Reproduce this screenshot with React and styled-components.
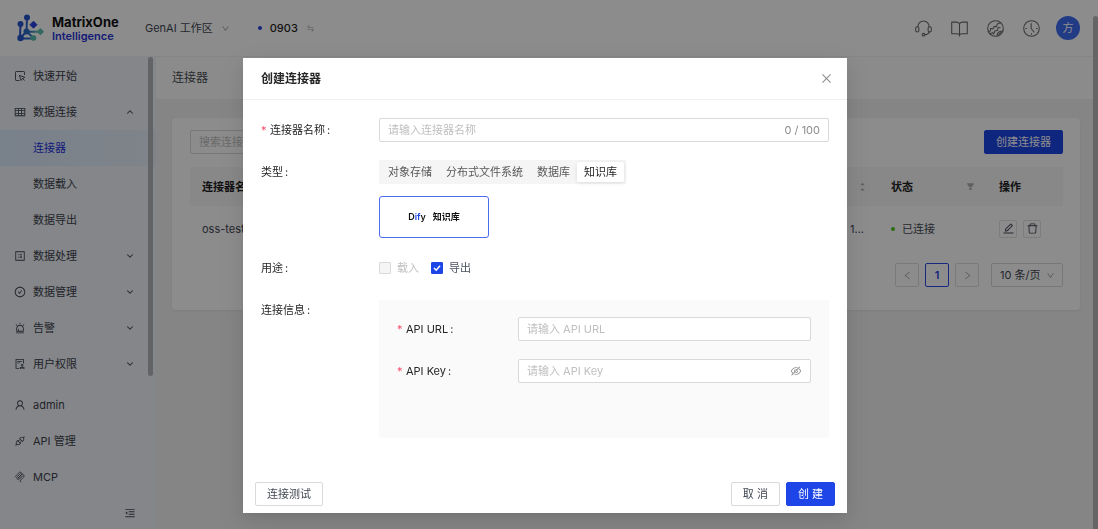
import React, { useState } from 'react'
import styled, { createGlobalStyle } from 'styled-components'
import {
    AiOutlineTable,
    AiOutlineProfile,
    AiOutlineCheckCircle,
    AiOutlineAlert,
    AiOutlineAudit,
    AiOutlineUser,
    AiOutlineApi,
    AiOutlineMenuFold,
    AiOutlineSwap,
    AiOutlineDown,
    AiOutlineLeft,
    AiOutlineRight,
    AiOutlineClose,
    AiOutlineEdit,
    AiOutlineDelete,
    AiOutlineEyeInvisible,
    AiFillFilter,
    AiFillCaretUp,
    AiFillCaretDown,
} from 'react-icons/ai'
import { ChevronDown, ChevronUp } from 'lucide-react'

const line = { fill: 'none', stroke: 'currentColor', strokeLinecap: 'round', strokeLinejoin: 'round' }

const StartIcon = () => (
    <svg width="12" height="12" viewBox="0 0 24 24" strokeWidth="1.800" {...line}>
        <path d="M21 9V4.500A1.500 1.500 0 0 0 19.500 3h-15A1.500 1.500 0 0 0 3 4.500v15A1.500 1.500 0 0 0 4.500 21H10" />
        <path d="M11 11l10.500 3.500-4 2.500 3 3.500M11 11l3 10 3-4" />
    </svg>
)

const McpIcon = () => (
    <svg width="12" height="12" viewBox="0 0 24 24" strokeWidth="1.600" {...line}>
        <path d="M2 11.500l8.500-8.500a3.200 3.200 0 0 1 4.500 4.500l-6.500 6.500" />
        <path d="M8.700 13.800l6.300-6.300a3.200 3.200 0 0 1 4.500 4.500l-7.700 7.700 2.200 2.300" />
        <path d="M12.800 5.200l-6.500 6.500a3.200 3.200 0 0 0 4.500 4.500l6.400-6.400" />
    </svg>
)

const HeadsetIcon = () => (
    <svg width="17" height="17" viewBox="0 0 24 24" strokeWidth="1.500" {...line}>
        <path d="M4 9.500a8 8 0 0 1 16 0" />
        <rect x="1" y="9.500" width="4.500" height="7.500" rx="2.200" />
        <rect x="18.500" y="9.500" width="4.500" height="7.500" rx="2.200" />
        <path d="M20.500 17c-1 2.400-3 3.500-6.500 3.800" />
        <circle cx="12" cy="20.800" r="1.900" />
    </svg>
)

const BookIcon = () => (
    <svg width="17" height="17" viewBox="0 0 24 24" strokeWidth="1.500" {...line}>
        <path d="M12 5c-1-1.200-2.500-2-4.500-2H1v16.500h7c1.800 0 3 .3 4 1.200 1-.9 2.200-1.200 4-1.200h7V3h-6.500c-2 0-3.500.8-4.500 2z" />
        <path d="M12 5v17.500" />
    </svg>
)

const GlobeIcon = () => (
    <svg width="17" height="17" viewBox="0 0 24 24" strokeWidth="1.500" {...line}>
        <circle cx="12" cy="12" r="11" />
        <path d="M2 16.500l2.500-1 .5-3.500 3.500.5 1.500-3.500 3.500.5 1-4L19 4" />
        <path d="M4 19.500l4-1.500 1.500 1.500 1.500-4 4-1 .5-3.500 3-.5" />
        <path d="M14.500 22.500c-.5-4 1.500-7 8-7M16.500 20.500l3-3.500" />
    </svg>
)

const ClockIcon = () => (
    <svg width="17" height="17" viewBox="0 0 24 24" strokeWidth="1.500" {...line}>
        <circle cx="12" cy="12" r="11" />
        <path d="M11.500 5v7l4 5M4 12h1M19 12h1M12 19v1" />
    </svg>
)

const LogoMark = () => (
    <svg width="28" height="28" viewBox="0 0 28 28">
        <defs>
            <linearGradient id="mark" x1="4" y1="0" x2="26" y2="0" gradientUnits="userSpaceOnUse">
                <stop offset="0" stopColor="#2454cc" />
                <stop offset="0.4" stopColor="#2f6ccb" />
                <stop offset="0.8" stopColor="#5cc0b0" />
            </linearGradient>
        </defs>
        <g stroke="url(#mark)" strokeWidth="2" fill="none" strokeLinecap="round" strokeLinejoin="round">
            <path d="M11 3l-.5 14.500M4.500 10l-.5 14M10.500 17.500L4.500 24M10.500 17.500L17.500 24M10.500 17.500L25 17.800M4.500 24.500h13" />
        </g>
        <g fill="#2555cc">
            <circle cx="11" cy="3.500" r="3" />
            <circle cx="4.500" cy="10" r="3" />
            <circle cx="4.500" cy="24" r="3.200" />
        </g>
        <circle cx="10.500" cy="17.500" r="3" fill="#2d68c8" />
        <path d="M17.500 7.200l3.500 3.500-3.500 3.500-3.500-3.500z" fill="#2a3fe0" stroke="#2a3fe0" strokeLinejoin="round" />
        <path d="M20.500 17.800L24.500 14l3.500 3.800-3.500 3.500z" fill="#62bfae" />
        <circle cx="17.500" cy="24" r="2.800" fill="#55bcb0" />
    </svg>
)

const CheckMark = () => (
    <svg width="8" height="8" viewBox="0 0 8 8" fill="none" stroke="#fff" strokeWidth="1.500">
        <path d="M1 4l2.200 2.200L7 1.800" />
    </svg>
)

const menu = [
    { label: '快速开始', icon: <StartIcon /> },
    { label: '数据连接', icon: <AiOutlineTable />, open: true },
    { label: '连接器', child: true, active: true },
    { label: '数据载入', child: true },
    { label: '数据导出', child: true },
    { label: '数据处理', icon: <AiOutlineProfile />, open: false },
    { label: '数据管理', icon: <AiOutlineCheckCircle />, open: false },
    { label: '告警', icon: <AiOutlineAlert />, open: false },
    { label: '用户权限', icon: <AiOutlineAudit />, open: false },
]

const bottomMenu = [
    { label: 'admin', icon: <AiOutlineUser /> },
    { label: 'API 管理', icon: <AiOutlineApi /> },
    { label: 'MCP', icon: <McpIcon /> },
]

const types = ['对象存储', '分布式文件系统', '数据库', '知识库']

const MenuRow = ({ item }) => (
    <MenuItem href="#" $active={item.active}>
        <MenuIcon>{item.icon}</MenuIcon>
        <span>{item.label}</span>
        {item.open === true && <ChevronUp size={10} strokeWidth={2.5} />}
        {item.open === false && <ChevronDown size={10} strokeWidth={2.5} />}
    </MenuItem>
)

const ConnectorModal = () => {
    const [name, setName] = useState('')
    const [type, setType] = useState('知识库')
    const [exportOn, setExportOn] = useState(true)

    return (
        <Mask>
            <Dialog role="dialog" aria-labelledby="dialog-title">
                <DialogHeader>
                    <DialogTitle id="dialog-title">创建连接器</DialogTitle>
                    <CloseButton type="button" aria-label="关闭"><AiOutlineClose /></CloseButton>
                </DialogHeader>
                <DialogBody>
                    <Field>
                        <Label htmlFor="name"><Star>*</Star>连接器名称<Colon>:</Colon></Label>
                        <InputBox>
                            <input id="name" maxLength={100} placeholder="请输入连接器名称" value={name} onChange={(e) => setName(e.target.value)} />
                            <Count>{name.length} / 100</Count>
                        </InputBox>
                    </Field>
                    <Field>
                        <Label as="span">类型<Colon>:</Colon></Label>
                        <TypeColumn>
                            <Segmented>
                                {types.map((t) => (
                                    <Segment key={t} type="button" $on={t === type} onClick={() => setType(t)}>{t}</Segment>
                                ))}
                            </Segmented>
                            <SourceCard type="button">
                                <span>D<em>if</em>y</span>
                                <span>知识库</span>
                            </SourceCard>
                        </TypeColumn>
                    </Field>
                    <Field>
                        <Label as="span">用途<Colon>:</Colon></Label>
                        <Checks>
                            <Check $disabled>
                                <input type="checkbox" disabled />
                                载入
                            </Check>
                            <Check>
                                <input type="checkbox" checked={exportOn} onChange={() => setExportOn(!exportOn)} />
                                {exportOn && <CheckMark />}
                                导出
                            </Check>
                        </Checks>
                    </Field>
                    <Field>
                        <Label as="span">连接信息<Colon>:</Colon></Label>
                        <InfoPanel>
                            <Field>
                                <Label htmlFor="url"><Star>*</Star>API URL<Colon>:</Colon></Label>
                                <InputBox><input id="url" placeholder="请输入 API URL" /></InputBox>
                            </Field>
                            <Field>
                                <Label htmlFor="key"><Star>*</Star>API Key<Colon>:</Colon></Label>
                                <InputBox>
                                    <input id="key" type="password" placeholder="请输入 API Key" />
                                    <AiOutlineEyeInvisible />
                                </InputBox>
                            </Field>
                        </InfoPanel>
                    </Field>
                </DialogBody>
                <DialogFooter>
                    <Button type="button">连接测试</Button>
                    <FooterRight>
                        <Button type="button">取 消</Button>
                        <Button type="button" $primary>创 建</Button>
                    </FooterRight>
                </DialogFooter>
            </Dialog>
        </Mask>
    )
}

const App = () => {
    return (
        <>
            <GlobalStyle />
            <Page>
                <Header>
                    <Logo>
                        <LogoMark />
                        <LogoText>
                            <strong>MatrixOne</strong>
                            <b>Intelligence</b>
                        </LogoText>
                    </Logo>
                    <Workspace type="button">GenAI 工作区<AiOutlineDown /></Workspace>
                    <Instance type="button"><Dot $color="#2a3fe0" />0903<AiOutlineSwap /></Instance>
                    <HeaderIcons>
                        <HeadsetIcon />
                        <BookIcon />
                        <GlobeIcon />
                        <ClockIcon />
                        <Avatar>方</Avatar>
                    </HeaderIcons>
                </Header>
                <Content>
                    <Sidebar>
                        <MenuScroll>
                            <MenuList>
                                {menu.map((m) => <MenuRow key={m.label} item={m} />)}
                            </MenuList>
                            <MenuThumb />
                        </MenuScroll>
                        <MenuList>
                            {bottomMenu.map((m) => <MenuRow key={m.label} item={m} />)}
                        </MenuList>
                        <Collapse type="button" aria-label="收起"><AiOutlineMenuFold /></Collapse>
                    </Sidebar>
                    <Main>
                        <Crumb>连接器</Crumb>
                        <Card>
                            <Toolbar>
                                <SearchBox><input aria-label="搜索" placeholder="搜索连接器" /></SearchBox>
                                <Button type="button" $primary>创建连接器</Button>
                            </Toolbar>
                            <Table>
                                <colgroup>
                                    <col />
                                    <col width="108" />
                                    <col width="108" />
                                    <col width="76" />
                                </colgroup>
                                <thead>
                                    <tr>
                                        <th>连接器名称</th>
                                        <th><HeadCell $end><Sorter><AiFillCaretUp /><AiFillCaretDown /></Sorter></HeadCell></th>
                                        <th><HeadCell>状态<AiFillFilter /></HeadCell></th>
                                        <th>操作</th>
                                    </tr>
                                </thead>
                                <tbody>
                                    <tr>
                                        <td>oss-test</td>
                                        <TimeCell>2025-09-03 1...</TimeCell>
                                        <td><Status><Dot $color="#52c41a" />已连接</Status></td>
                                        <td>
                                            <Actions>
                                                <IconButton type="button" aria-label="编辑"><AiOutlineEdit /></IconButton>
                                                <IconButton type="button" aria-label="删除"><AiOutlineDelete /></IconButton>
                                            </Actions>
                                        </td>
                                    </tr>
                                </tbody>
                            </Table>
                            <Pagination>
                                <PageButton type="button" aria-label="上一页"><AiOutlineLeft /></PageButton>
                                <PageButton type="button" $current>1</PageButton>
                                <PageButton type="button" aria-label="下一页"><AiOutlineRight /></PageButton>
                                <PageSize>
                                    <select aria-label="每页条数"><option>10 条/页</option></select>
                                    <AiOutlineDown />
                                </PageSize>
                            </Pagination>
                        </Card>
                    </Main>
                </Content>
                <PageThumb />
            </Page>
            <ConnectorModal />
        </>
    )
}

export default App

const GlobalStyle = createGlobalStyle`
    *{
        box-sizing: border-box;
    }

    body{
        margin: 0;
        color: #434854;
        font-family: Inter, "Noto Sans CJK SC", sans-serif;
        font-size: 11px;
        line-height: 16px;
    }

    button, input, select{
        margin: 0;
        font: inherit;
        color: inherit;
    }

    button{
        cursor: pointer;
    }

    svg{
        flex-shrink: 0;
    }
`

const Page = styled.div`
    display: flex;
    flex-direction: column;
    min-height: 100vh;
    background-color: #f2f2f2;
`

const Header = styled.header`
    display: flex;
    align-items: center;
    height: 57px;
    padding: 0 18px 0 16px;
    background-color: #ffffff;
    border-bottom: 1px solid #f2f2f2;
`

const Logo = styled.div`
    display: flex;
    align-items: center;
    gap: 8px;
    width: 129px;
`

const LogoText = styled.div`
    display: flex;
    flex-direction: column;
    color: #111111;

    strong{
        font-size: 13px;
        font-weight: 700;
        line-height: 16px;
    }

    b{
        color: #2a35d8;
        font-weight: 600;
        line-height: 13px;
    }
`

const Workspace = styled.button`
    display: flex;
    align-items: center;
    gap: 8px;
    padding: 0;
    border: none;
    background: none;

    svg{
        width: 9px;
        color: #9a9a9a;
    }
`

const Instance = styled(Workspace)`
    gap: 8px;
    margin-left: 28px;
    color: #1f1f1f;
    font-weight: 500;
`

const Dot = styled.i`
    width: 4px;
    height: 4px;
    border-radius: 50%;
    background-color: ${({ $color }) => $color};
`

const HeaderIcons = styled.div`
    display: flex;
    align-items: center;
    gap: 19px;
    margin-left: auto;
    color: #6a6a6a;
`

const Avatar = styled.div`
    display: flex;
    align-items: center;
    justify-content: center;
    width: 24px;
    height: 24px;
    margin-left: -3px;
    border-radius: 50%;
    background-color: #3f6cf2;
    color: #ffffff;
`

const Content = styled.div`
    display: flex;
    flex: 1;
`

const Sidebar = styled.aside`
    display: flex;
    flex-direction: column;
    width: 156px;
    background-color: #f1f4fb;
`

const MenuScroll = styled.div`
    position: relative;
    padding: 1px 0 5px;
`

const MenuThumb = styled.div`
    position: absolute;
    top: 0;
    right: 3px;
    bottom: 11px;
    width: 5px;
    border-radius: 3px;
    background-color: #b2b4b8;
`

const MenuList = styled.nav`
    display: flex;
    flex-direction: column;
`

const MenuItem = styled.a`
    display: flex;
    align-items: center;
    height: 36px;
    padding: 0 21px 0 14px;
    color: ${({ $active }) => ($active ? '#2431e0' : '#3d424c')};
    background-image: ${({ $active }) => ($active ? 'linear-gradient(90deg, #dcebfb, #e8f0fb)' : 'none')};
    text-decoration: none;

    > svg{
        margin-left: auto;
    }
`

const MenuIcon = styled.span`
    display: flex;
    width: 19px;

    svg{
        width: 12px;
        height: 12px;
    }
`

const Collapse = styled.button`
    display: flex;
    margin: auto 20px 10px auto;
    padding: 0;
    border: none;
    background: none;
    font-size: 12px;
`

const Main = styled.main`
    flex: 1;
    min-width: 0;
`

const Crumb = styled.h1`
    margin: 0 0 19px;
    padding: 13px 16px;
    background-color: #fdfdfd;
    font-size: 12px;
    font-weight: 400;
    color: #4c4f55;
`

const Card = styled.section`
    margin: 0 18px 0 16px;
    padding: 12px 17px 23px 18px;
    border-radius: 4px;
    background-color: #ffffff;
    box-shadow: 0 1px 3px rgba(0,0,0,0.06);
`

const Toolbar = styled.div`
    display: flex;
    justify-content: space-between;
    margin-bottom: 13px;
`

const InputBox = styled.div`
    display: flex;
    flex: 1;
    align-items: center;
    height: 24px;
    padding: 0 8px;
    border: 1px solid #d9d9d9;
    border-radius: 2px;
    background-color: #ffffff;

    input{
        flex: 1;
        min-width: 0;
        padding: 0;
        border: none;
        outline: none;
        background: none;
    }

    input::placeholder{
        color: #bfbfbf;
    }

    svg{
        width: 12px;
        height: 12px;
        color: #8c8c8c;
    }
`

const SearchBox = styled(InputBox)`
    flex: 0 1 200px;
`

const Button = styled.button`
    height: 24px;
    padding: 0 11px;
    border: 1px solid ${({ $primary }) => ($primary ? '#1d45e8' : '#d9d9d9')};
    border-radius: 2px;
    background-color: ${({ $primary }) => ($primary ? '#1d45e8' : '#ffffff')};
    color: ${({ $primary }) => ($primary ? '#ffffff' : '#434854')};
`

const Table = styled.table`
    width: 100%;
    table-layout: fixed;
    border-collapse: collapse;

    th, td{
        padding: 0 12px;
        text-align: left;
        white-space: nowrap;
    }

    th{
        height: 39px;
        background-color: #f8f8f8;
        color: #1f1f1f;
        font-weight: 600;
    }

    td{
        height: 45px;
    }
`

const TimeCell = styled.td`
    &&{
        padding: 0 15px 0 0;
        text-align: right;
    }
`

const HeadCell = styled.div`
    display: flex;
    align-items: center;
    justify-content: ${({ $end }) => ($end ? 'flex-end' : 'space-between')};

    > svg{
        width: 9px;
        color: #b0b0b0;
    }
`

const Sorter = styled.span`
    display: flex;
    flex-direction: column;
    color: #b0b0b0;

    svg{
        width: 9px;
        height: 6px;
    }
`

const Status = styled.div`
    display: flex;
    align-items: center;
    gap: 7px;
`

const Actions = styled.div`
    display: flex;
    gap: 6px;
`

const IconButton = styled.button`
    display: flex;
    align-items: center;
    justify-content: center;
    width: 18px;
    height: 18px;
    padding: 0;
    border: 1px solid #e4e4e4;
    border-radius: 2px;
    background: none;
    font-size: 13px;
`

const Pagination = styled.div`
    display: flex;
    justify-content: flex-end;
    gap: 6px;
    margin-top: 12px;
`

const PageButton = styled.button`
    display: flex;
    align-items: center;
    justify-content: center;
    width: 24px;
    height: 24px;
    padding: 0;
    border: 1px solid ${({ $current }) => ($current ? '#2a4be8' : '#dedede')};
    border-radius: 2px;
    background: none;
    color: ${({ $current }) => ($current ? '#2a3fe0' : '#b0b0b0')};
    font-weight: 600;
`

const PageSize = styled.div`
    position: relative;
    margin-left: 6px;

    select{
        width: 72px;
        height: 24px;
        padding: 0 8px;
        border: 1px solid #d9d9d9;
        border-radius: 2px;
        background: none;
        appearance: none;
    }

    svg{
        position: absolute;
        top: 8px;
        right: 8px;
        width: 9px;
        height: 9px;
        color: #999999;
        pointer-events: none;
    }
`

const PageThumb = styled.div`
    position: fixed;
    top: 16px;
    right: 0;
    bottom: 0;
    width: 5px;
    border-radius: 3px 3px 0 0;
    background-color: #b8b8b8;
`

const Mask = styled.div`
    position: fixed;
    inset: 0;
    display: flex;
    align-items: flex-start;
    justify-content: center;
    padding: 58px 8px 0 0;
    background-color: rgba(0,0,0,0.45);
    overflow: auto;
`

const Dialog = styled.section`
    width: 100%;
    max-width: 604px;
    background-color: #ffffff;
    color: #262626;
    box-shadow: 0 3px 6px -4px rgba(0,0,0,0.12), 0 6px 16px rgba(0,0,0,0.08), 0 9px 28px 8px rgba(0,0,0,0.05);
`

const DialogHeader = styled.header`
    display: flex;
    align-items: center;
    justify-content: space-between;
    height: 42px;
    padding: 0 14px 0 18px;
    border-bottom: 1px solid #f0f0f0;
`

const DialogTitle = styled.h2`
    margin: 0;
    font-size: 12px;
    font-weight: 600;
`

const CloseButton = styled.button`
    display: flex;
    padding: 0;
    border: none;
    background: none;
    color: #8c8c8c;
    font-size: 13px;
`

const DialogBody = styled.div`
    display: flex;
    flex-direction: column;
    gap: 18px;
    padding: 18px;
`

const Field = styled.div`
    display: flex;
    align-items: flex-start;
`

const Label = styled.label`
    flex: 0 0 118px;
    line-height: 24px;
`

const Star = styled.span`
    display: inline-block;
    width: 9px;
    color: #f5506e;
`

const Colon = styled.span`
    margin-left: 2px;
`

const Count = styled.span`
    color: #8c8c8c;
`

const TypeColumn = styled.div`
    display: flex;
    flex-direction: column;
    align-items: flex-start;
    gap: 12px;
`

const Segmented = styled.div`
    display: flex;
    padding: 2px;
    background-color: #f5f5f5;
`

const Segment = styled.button`
    height: 20px;
    padding: 0 7px;
    border: none;
    border-radius: 2px;
    background-color: ${({ $on }) => ($on ? '#ffffff' : 'transparent')};
    color: ${({ $on }) => ($on ? '#262626' : '#595959')};
    box-shadow: ${({ $on }) => ($on ? '0 1px 4px rgba(0,0,0,0.1)' : 'none')};
`

const SourceCard = styled.button`
    display: flex;
    align-items: center;
    justify-content: center;
    gap: 7px;
    width: 110px;
    height: 42px;
    border: 1px solid #4a6cf0;
    border-radius: 3px;
    background-color: #ffffff;
    color: #111111;
    font-size: 9px;
    font-weight: 600;

    em{
        color: #1d45e8;
        font-style: normal;
    }
`

const Checks = styled.div`
    display: flex;
    gap: 12px;
`

const Check = styled.label`
    position: relative;
    display: flex;
    align-items: center;
    gap: 6px;
    height: 24px;
    color: ${({ $disabled }) => ($disabled ? '#bfbfbf' : '#4a5160')};

    input{
        width: 12px;
        height: 12px;
        border: 1px solid #d9d9d9;
        border-radius: 1px;
        background-color: #f5f5f5;
        appearance: none;
    }

    input:checked{
        border-color: #1d45e8;
        background-color: #1d45e8;
    }

    svg{
        position: absolute;
        top: 8px;
        left: 2px;
        pointer-events: none;
    }
`

const InfoPanel = styled.div`
    display: flex;
    flex: 1;
    flex-direction: column;
    gap: 18px;
    min-height: 138px;
    margin-top: 2px;
    padding: 17px 18px;
    background-color: #fafafa;

    ${Label}{
        flex-basis: 121px;
    }
`

const DialogFooter = styled.footer`
    display: flex;
    justify-content: space-between;
    padding: 26px 12px 7px;
`

const FooterRight = styled.div`
    display: flex;
    gap: 6px;
`
